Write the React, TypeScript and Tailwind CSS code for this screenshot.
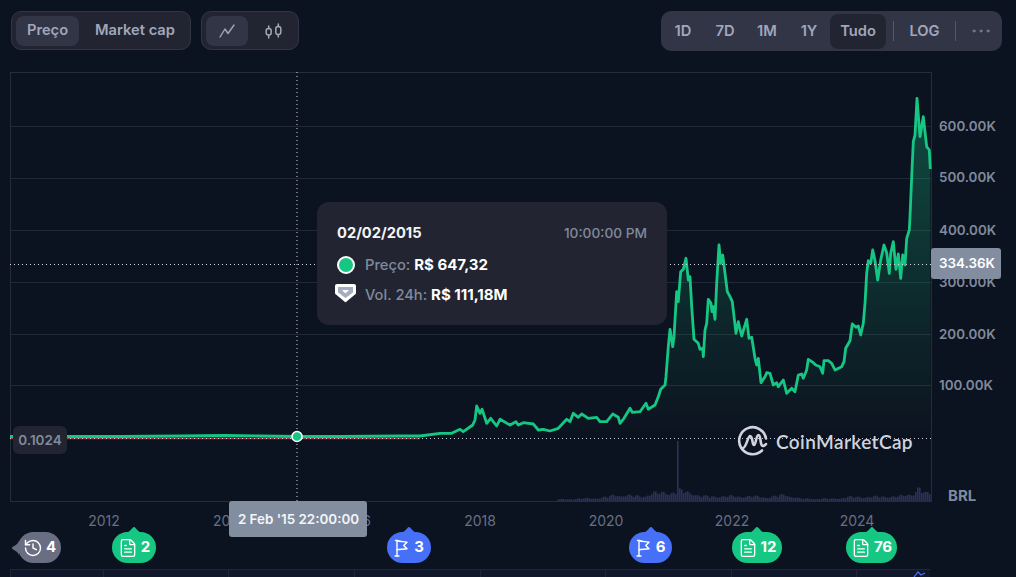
import React from "react";
import { FileText, History, Ellipsis } from "lucide-react";

const pricePts: [number, number][] = [
  [10,436.5],[120,436.5],[180,436],[225,435.5],[260,436],[297,436.5],[340,436.5],[400,436],[420,436],[440,433.3],[451.7,433.3],[460,429.3],[463.3,431.7],[472.7,425],[475,420],[476.7,406],[480,413.3],[482,409.3],[486.7,423.3],[490.7,418.3],[496.7,426],[500,419.3],[510,425],[516,421.7],[518.3,425],[523.3,422.7],[533.3,424],[538.3,430],[543.3,429.3],[550,431],[558.3,428.3],[566.7,419.3],[570,421.7],[573.3,413.3],[578.3,417.3],[581.7,414],[588.3,418.3],[596.7,417.3],[600,421.7],[606.7,421.7],[612.7,414],[618.3,417.3],[620,423.3],[624,418.3],[630,408.3],[632.3,412.3],[640,411.7],[646,403.3],[648.3,409.3],[655,405],[658.3,396.7],[660.7,389.3],[665,385],[666,376.7],[668.3,346.7],[670,329.3],[672.7,346.7],[674,336.7],[676.7,291.7],[678.3,301.7],[680.7,271.7],[683.3,269.3],[686,258.3],[688.3,280],[690,276.7],[691.7,306.7],[694,339.3],[698.3,343.3],[700,349.3],[702.7,348.3],[703.3,356.7],[705,330],[706.7,323.3],[708.3,299.3],[711,303.3],[712,311.7],[713.3,306.7],[715,319.3],[716.7,283.3],[719,245],[720.7,263.3],[722.7,255],[725,273.3],[727.3,291.7],[730,296.7],[732.3,301.7],[736,333.3],[738.3,321.7],[741.7,336],[746.7,319.3],[749,338.3],[751.7,337.3],[755,358.3],[756.7,365],[758.3,358.3],[761,382.7],[765,376.7],[766.7,372.7],[770,373.3],[773.3,385],[776.7,382.7],[778.3,386.7],[783.3,380],[786.7,393.3],[791.7,388.3],[795,391.7],[798.3,375],[801.7,374],[803.3,378.3],[806.7,370],[808.3,359.3],[813.3,362.7],[815.7,365],[820,366.7],[822.7,373.3],[824,360.7],[828.3,360.7],[831.7,363.3],[835,370],[841.7,366.7],[844,361.7],[845.7,348.3],[850,340.7],[852.3,324],[856,327.3],[858.3,326],[860.7,335],[863.3,323.3],[865,303.3],[866.7,273.3],[868.3,260.7],[870.7,263.3],[872.7,250],[875,260.7],[877.7,280],[880.7,260],[884,245],[886.7,252.7],[889.3,273.3],[890.7,253.3],[893.3,241.7],[896,269.3],[898.3,254],[900.7,278.3],[902.7,255],[905,265],[906.7,238.3],[909.3,230],[910,216.7],[911.7,176.7],[913.3,141.7],[915,135],[917,98.3],[920,136.7],[923.3,116.7],[926.7,146.7],[929.3,150],[930.3,169],
];
const line = pricePts.map((p) => p.join(",")).join(" ");
const area = `10,437 ${line} 930.3,437`;

const envelope: [number, number][] = [[557,2],[600,4],[617,8],[627,7],[640,6],[653,10],[667,11],[680,13],[693,10],[700,6],[733,6],[750,6],[767,5],[785,8],[800,3],[833,3],[847,5],[900,6],[913,10],[918,18],[924,9],[931,11]];
function env(x: number) {
  for (let i = 1; i < envelope.length; i++) {
    const [a, h] = envelope[i - 1];
    const [b, k] = envelope[i];
    if (x <= b) return h + ((k - h) * (x - a)) / (b - a);
  }
  return 5;
}
const bars: [number, number][] = [];
for (let x = 557; x < 931; x += 2) {
  const n = 0.55 + 0.45 * Math.abs(Math.sin(x * 1.7) * Math.cos(x * 0.37));
  bars.push([x, x === 677 ? 60 : Math.max(1, env(x) * n)]);
}

const gridY = [126, 178, 230, 282, 334, 385];
const yLabels: [string, number][] = [["600.00K", 126], ["500.00K", 177], ["400.00K", 230], ["300.00K", 282], ["200.00K", 334], ["100.00K", 385]];
const xLabels: [string, number][] = [["2012", 104], ["2014", 229], ["2016", 355], ["2018", 480], ["2020", 606], ["2022", 732], ["2024", 857]];
const stripLines = [103, 228, 354, 480, 605, 731, 856];

function PinFlag() {
  return (
    <svg width="14" height="18" viewBox="0 0 14 18" fill="none" stroke="white" strokeWidth="1.4" strokeLinecap="round" strokeLinejoin="round">
      <path d="M1 17H5" />
      <path d="M3 17V1.5" />
      <path d="M1.5 1.5H3C5 2.5 9 2.5 13 3.3L9.7 6.5L13 9.8C9 10.3 5 10.3 3 10.8" />
    </svg>
  );
}

function Pin({ left, width, color, gap, children }: { left: number; width: number; color: string; gap: string; children: React.ReactNode }) {
  return (
    <div className="absolute top-[455px] h-[36px] flex flex-col items-center" style={{ left, width }}>
      <svg width="18" height="6" viewBox="0 0 18 6" className="-mb-px" style={{ fill: color }}>
        <path d="M0 6C5 6 7 0 9 0C11 0 13 6 18 6Z" />
      </svg>
      <div className={`h-[31px] w-full rounded-[15.5px] flex items-center justify-center text-white text-[15px] font-bold ${gap}`} style={{ backgroundColor: color }}>
        {children}
      </div>
    </div>
  );
}

export default function App() {
  return (
    <div className="w-[1016px] h-[577px] overflow-hidden bg-[#0c1320] font-['Inter',sans-serif]">
      <div className="flex justify-between items-start h-[72px] pt-[11px] pl-[11px] pr-[14px]">
        <div className="flex gap-[10px]">
          <div className="flex h-[39px] items-center rounded-[10px] border border-[#323546] bg-[#222531] pl-1">
            <div className="h-[30px] w-[63px] rounded-lg bg-[#323546] flex items-center justify-center text-[14.7px] font-semibold text-[#a1a7bb]">Preço</div>
            <div className="h-[30px] w-[111px] pl-4 flex items-center whitespace-nowrap text-[14.7px] font-semibold text-[#a1a7bb]">Market cap</div>
          </div>
          <div className="flex h-[39px] items-center rounded-[10px] border border-[#323546] bg-[#222531] pl-1">
            <div className="h-[30px] w-[42px] rounded-lg bg-[#323546] flex items-center justify-center">
              <svg width="16" height="14" viewBox="0 0 16 14" fill="none" stroke="#a1a7bb" strokeWidth="1.4" strokeLinecap="round" strokeLinejoin="round">
                <path d="M1 13L6 5L9 9.5L15 1" />
              </svg>
            </div>
            <div className="h-[30px] w-[50px] flex items-center justify-center">
              <svg width="17" height="16" viewBox="0 0 17 16" fill="none" stroke="#a1a7bb" strokeWidth="1.5" strokeLinecap="round">
                <rect x="1.2" y="5.5" width="5" height="6.5" rx="2.3" />
                <path d="M3.7 3V5.5M3.7 12V15" />
                <rect x="10.8" y="3.5" width="5" height="8" rx="2.3" />
                <path d="M13.3 1V3.5M13.3 11.5V14" />
              </svg>
            </div>
          </div>
        </div>
        <div className="flex items-center h-10 w-[341px] pl-px rounded-[10px] bg-[#323546] text-[14.7px] font-semibold text-[#a1a7bb]">
          {["1D", "7D", "1M", "1Y"].map((t) => (
            <div key={t} className="w-[42px] text-center">{t}</div>
          ))}
          <div className="h-[35px] w-14 rounded-lg bg-[#222531] flex items-center justify-center">Tudo</div>
          <div className="ml-[7px] h-5 w-px bg-[#53586e]" />
          <div className="ml-[15px] w-[31px] text-center">LOG</div>
          <div className="ml-[15px] h-5 w-px bg-[#53586e]" />
          <Ellipsis className="ml-[13px] text-[#808a9d]" size={24} strokeWidth={1} />
        </div>
      </div>

      <div className="relative w-[1016px] h-[505px]">
        <svg width="1016" height="505" viewBox="0 72 1016 505" className="block text-[13.4px] font-semibold font-['Inter',sans-serif]">
          <defs>
            <linearGradient id="priceFill" x1="0" y1="98" x2="0" y2="437" gradientUnits="userSpaceOnUse">
              <stop offset="0" stopColor="#16c784" stopOpacity="0.32" />
              <stop offset="1" stopColor="#16c784" stopOpacity="0" />
            </linearGradient>
          </defs>
          {gridY.map((y) => (
            <line key={y} x1="10" x2="931" y1={y + 0.5} y2={y + 0.5} stroke="#222836" />
          ))}
          <rect x="10.5" y="72.5" width="921" height="429" fill="none" stroke="#272c3b" />
          {bars.map(([x, h]) => (
            <rect key={x} x={x} y={501 - h} width="1.6" height={h} fill="#2b3259" />
          ))}
          <polygon points={area} fill="url(#priceFill)" />
          <line x1="10" x2="420" y1="438.5" y2="438.5" stroke="#a8333f" strokeWidth="1.5" />
          <line x1="10" x2="931" y1="438.5" y2="438.5" stroke="#c9ccd6" strokeDasharray="1 3" />
          <polyline points={line} fill="none" stroke="#16c784" strokeWidth="2.8" strokeLinejoin="round" />
          <line x1="10" x2="931" y1="264.5" y2="264.5" stroke="#d4d7e0" strokeDasharray="1 3" />
          <line x1="297" x2="297" y1="72" y2="501" stroke="#d4d7e0" strokeDasharray="1 3" />
          <circle cx="297" cy="436.5" r="5" fill="#16c784" stroke="white" strokeWidth="1.5" />
          {yLabels.map(([t, y]) => (
            <text key={t} x="939" y={y + 5} fill="#808a9d">{t}</text>
          ))}
          <text x="948" y="501" fill="#808a9d" className="font-bold text-[15px]">BRL</text>
          {xLabels.map(([t, x]) => (
            <text key={t} x={x} y="526" textAnchor="middle" fill="#686f83" className="font-normal text-sm">{t}</text>
          ))}
          <rect x="10" y="569" width="920" height="8" fill="#11182c" />
          <line x1="10" x2="930" y1="569.5" y2="569.5" stroke="#20263a" />
          <line x1="10.5" x2="10.5" y1="569" y2="577" stroke="#20263a" />
          {stripLines.map((x) => (
            <line key={x} x1={x + 0.5} x2={x + 0.5} y1="569" y2="577" stroke="#20263a" />
          ))}
          <path d="M914 577L918 572L921 575L925 573" fill="none" stroke="#4670f7" strokeWidth="1.2" />
          <g fill="none" stroke="#cfd4de" strokeWidth="2.6" strokeLinecap="round" strokeLinejoin="round">
            <path d="M762 450.5A13.5 13.5 0 1 1 766 438.5" />
            <path d="M743 448C746 448 748 436 750 436C753 436 752 445 754 445C756 445 756 435 758.5 435C761 435 760 444 762 445.5C763 446.5 765 445.5 766 444" />
          </g>
        </svg>

        <div className="absolute left-[776px] top-[358px] text-[19px] leading-6 font-semibold font-['Lato',sans-serif] tracking-[0.4px] text-[#cfd4de]">CoinMarketCap</div>

        <div className="absolute left-[13px] top-[354px] h-7 w-[54px] rounded-md bg-[#222531] flex items-center justify-center text-[13.5px] font-semibold text-[#808a9d]">0.1024</div>

        <div className="absolute left-[931px] top-[176px] h-[31px] w-[70px] rounded-[3px] bg-[#828da0] flex items-center pl-2 text-[13.4px] font-semibold text-white">334.36K</div>

        <div className="absolute left-[317px] top-[130px] w-[350px] h-[123px] rounded-xl bg-[#222531] px-5 pt-5 text-[14.7px]">
          <div className="flex justify-between items-center h-[22px]">
            <span className="font-bold text-[#f4f5f8]">02/02/2015</span>
            <span className="font-medium text-[13.7px] text-[#808a9d]">10:00:00 PM</span>
          </div>
          <div className="flex items-center h-[30px] mt-[6px] font-medium text-[#808a9d]">
            <span className="mr-[10px] h-[18px] w-[18px] rounded-full bg-[#16c784] border-2 border-white" />
            <span>Preço:&nbsp;</span><span className="font-bold text-[15px] text-white">R$ 647,32</span>
          </div>
          <div className="flex items-center h-[30px] font-medium text-[#808a9d]">
            <svg width="21" height="19" viewBox="0 0 21 19" className="-ml-[2px] mr-[9px] -mt-[3px]">
              <path d="M2 0H19Q21 0 21 2V9Q21 10 20 10.5L11 18Q10.5 18.5 10 18L1 10.5Q0 10 0 9V2Q0 0 2 0Z" fill="white" />
              <path d="M3 3H18V8.5L10.5 14L3 8.5Z" fill="#a6adc2" />
              <path d="M7 6H14L10.5 9.5Z" fill="white" />
            </svg>
            <span>Vol. 24h:&nbsp;</span><span className="font-bold text-[15px] text-white">R$ 111,18M</span>
          </div>
        </div>

        <div className="absolute left-[229px] top-[429px] w-[138px] h-9 pl-px rounded-[3px] bg-[#828da0] flex items-center justify-center text-[13.4px] font-semibold text-[#f4f5f8]">2 Feb '15 22:00:00</div>

        <div className="absolute left-[12px] top-[460px] h-[31px] w-[49px] flex items-center">
          <svg width="7" height="16" viewBox="0 0 7 16" className="-mr-px fill-[#696e83]">
            <path d="M7 0C7 5 0 6 0 8C0 10 7 11 7 16Z" />
          </svg>
          <div className="h-[31px] flex-1 rounded-[15.5px] bg-[#696e83] flex items-center justify-center gap-[3px] text-white text-[15px] font-bold">
            <History size={20} strokeWidth={1.7} />4
          </div>
        </div>
        <Pin left={112} width={44} color="#16c784" gap="gap-[3px]"><FileText size={20} strokeWidth={1.6} />2</Pin>
        <Pin left={387} width={44} color="#4670f7" gap="gap-[6px]"><PinFlag />3</Pin>
        <Pin left={629} width={43} color="#4670f7" gap="gap-[6px]"><PinFlag />6</Pin>
        <Pin left={732} width={50} color="#16c784" gap="gap-[3px]"><FileText size={20} strokeWidth={1.6} />12</Pin>
        <Pin left={846} width={51} color="#16c784" gap="gap-[3px]"><FileText size={20} strokeWidth={1.6} />76</Pin>
      </div>
    </div>
  );
}
